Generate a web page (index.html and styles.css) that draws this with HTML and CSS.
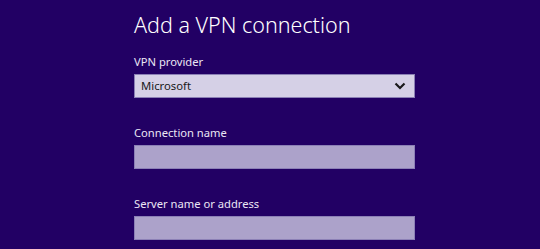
FILE: index.html
```html
<!DOCTYPE html>
<html lang="en">
<head>
	<meta charset="UTF-8">
	<title>Add a VPN connection</title>
	<link rel="stylesheet" href="styles.css">
</head>
<body>
<main class="panel">
	<h1 class="title">Add a VPN connection</h1>

	<div class="field">
		<label class="label" for="provider">VPN provider</label>
		<div class="select">
			<span class="select-value" id="provider">Microsoft</span>
			<svg class="chevron" width="12" height="8" viewBox="0 0 12 8">
				<path d="M1.5 1.5 L6 6 L10.5 1.5" fill="none" stroke="#1a1a1a" stroke-width="2.2"/>
			</svg>
		</div>
	</div>

	<div class="field">
		<label class="label" for="connName">Connection name</label>
		<input class="text-input" id="connName" type="text">
	</div>

	<div class="field">
		<label class="label" for="server">Server name or address</label>
		<input class="text-input" id="server" type="text">
	</div>
</main>
</body>
</html>
```

FILE: styles.css
```css
html, body {
	margin: 0;
	height: 100%;
}

body {
	background: #220064;
	font-family: "Segoe UI", "Noto Sans", "Open Sans", sans-serif;
	color: #ffffff;
	overflow: hidden;
}

.panel {
	width: 281px;
	margin-left: 134px;
	padding-top: 10px;
}

.title {
	margin: 0;
	font-size: 21.5px;
	font-weight: 300;
	line-height: 30px;
}

.field {
	margin-top: 14px;
}

.field + .field {
	margin-top: 27px;
}

.label {
	display: block;
	font-size: 11.2px;
	line-height: 16px;
	margin-bottom: 4px;
	color: #ebe7f4;
}

.select {
	box-sizing: border-box;
	height: 24px;
	background: #d5d0e6;
	border: 1px solid #8b80b5;
	display: flex;
	align-items: center;
	justify-content: space-between;
	padding: 0 8px 2px 6px;
}

.select-value {
	color: #1a1a1a;
	font-size: 11.3px;
}

.chevron {
	margin-top: 2px;
}

.text-input {
	display: block;
	box-sizing: border-box;
	width: 100%;
	height: 24px;
	margin: 0;
	background: #aca2ca;
	border: 1px solid #8c80b6;
	padding: 0 6px;
}
```
